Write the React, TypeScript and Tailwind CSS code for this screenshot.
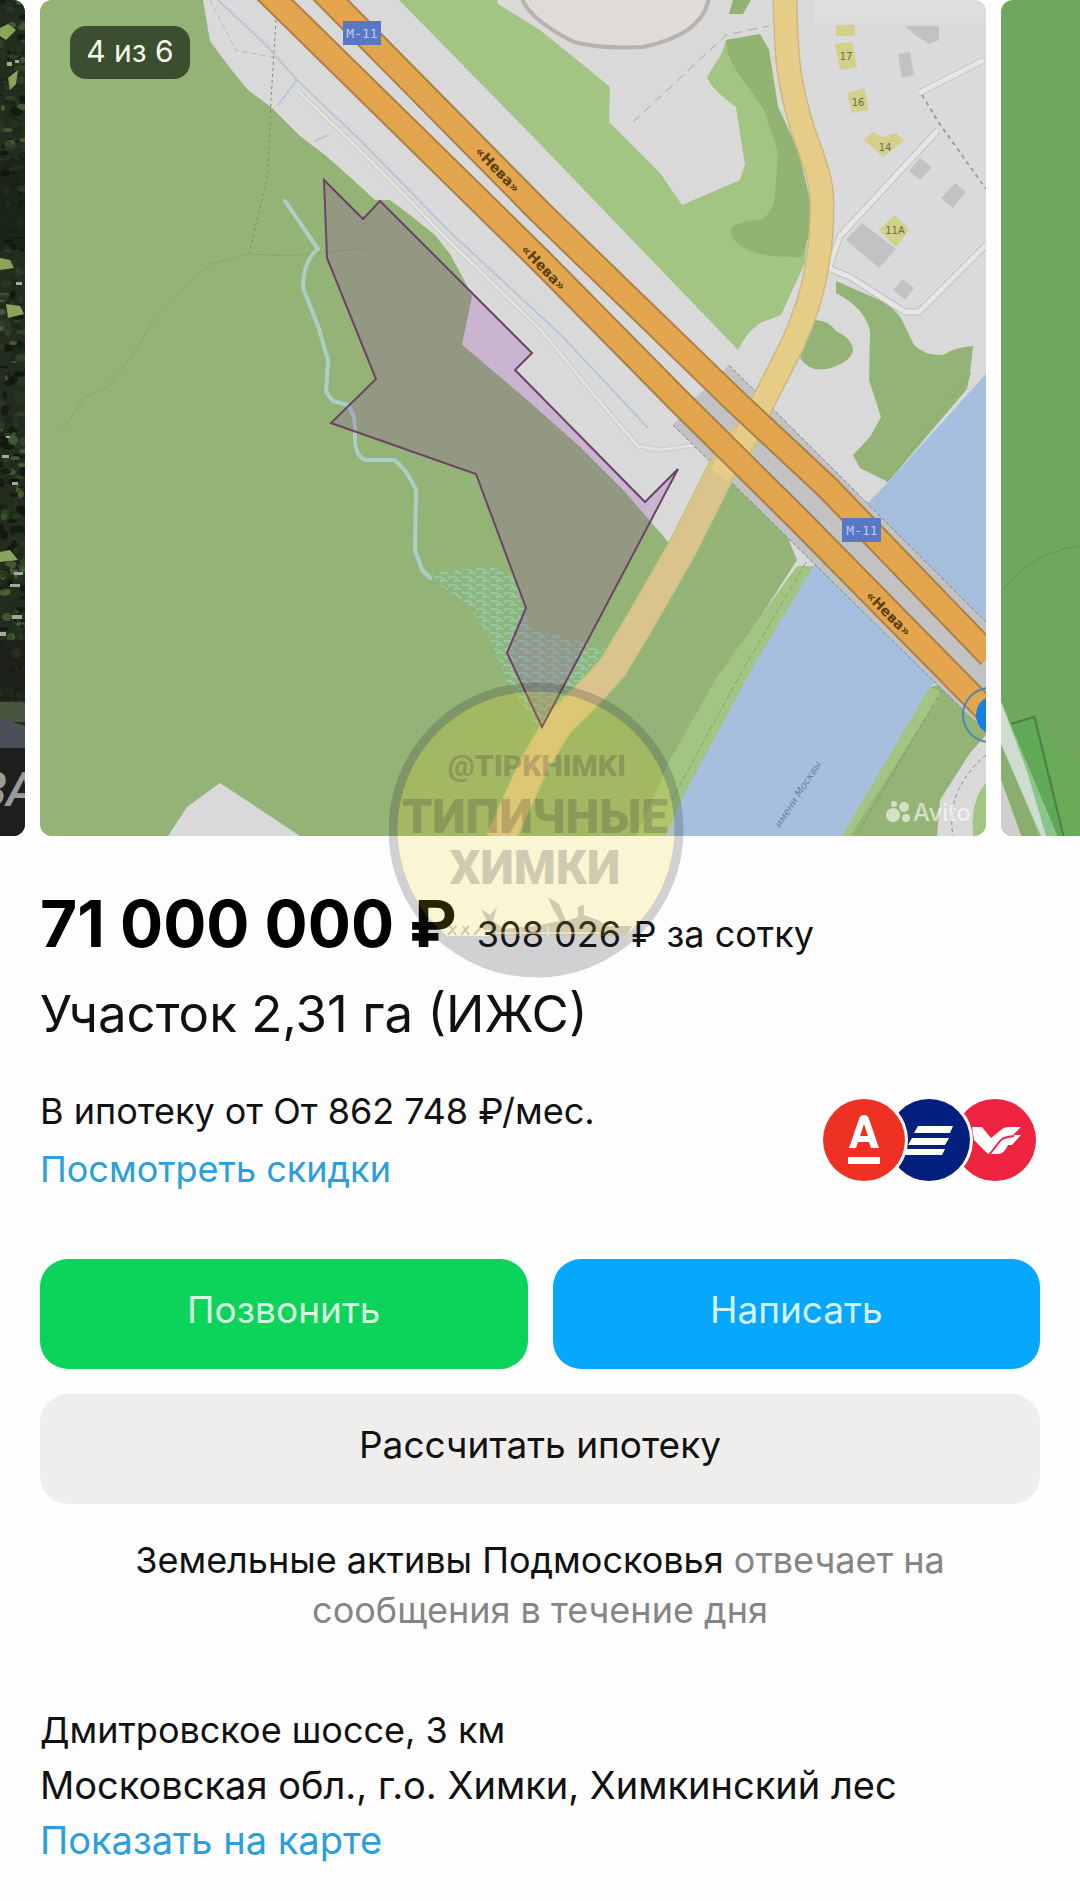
const speckles = (() => {
  let seed = 7;
  const next = () => {
    seed = (seed * 16807) % 2147483647;
    return seed / 2147483647;
  };
  const tones = ['#10170f', '#26371f', '#334a2a', '#4d6a38', '#1a2616', '#16120f', '#2f3a2a', '#222d1d'];
  return Array.from({ length: 380 }, () => ({
    x: Math.round(next() * 26),
    y: Math.round(next() * 700),
    rx: 2 + Math.round(next() * 4),
    ry: 1 + Math.round(next() * 4),
    fill: tones[Math.floor(next() * tones.length)],
  }));
})();

function ForestPhoto() {
  return (
    <svg className="block h-full w-full" viewBox="0 0 25 836" preserveAspectRatio="xMaxYMid slice" role="img" aria-label="Фото участка">
      <rect width="25" height="836" fill="#222d1d" />
      {speckles.map((s, i) => (
        <ellipse key={i} cx={s.x} cy={s.y} rx={s.rx} ry={s.ry} fill={s.fill} opacity="0.75" />
      ))}
      <path
        d="M0 28 L8 24 L16 30 L6 40 L0 36 Z M8 78 L18 70 L16 84 L10 90 Z M0 258 L10 260 L14 268 L0 270 Z M6 304 L20 306 L24 314 L8 318 Z M0 552 L10 550 L18 560 L0 562 Z"
        fill="#8aa45c"
      />
      <path
        d="M7 62 h5 v4 h-5 Z M15 60 h4 v3 h-4 Z M16 282 h6 v3 h-6 Z M2 455 h7 v3 h-7 Z M12 482 h6 v3 h-6 Z M6 436 h4 v2 h-4 Z M10 584 h10 v3 h-10 Z M14 572 h9 v3 h-9 Z M12 615 h10 v4 h-10 Z M0 632 h6 v4 h-6 Z"
        fill="#a3aa9a"
      />
      <rect y="160" width="25" height="90" fill="#0e160e" opacity="0.4" />
      <rect y="640" width="25" height="60" fill="#1b1d18" opacity="0.7" />
      <rect y="702" width="25" height="20" fill="#47573f" />
      <path d="M0 718 L25 726 V750 H0 Z" fill="#4b5058" />
      <rect y="748" width="25" height="88" fill="#1d1e1e" />
      <text x="-22" y="806" fontSize="48" fontFamily="Roboto, sans-serif" fontWeight="500" fontStyle="italic" fill="#9a9a96">ЗА</text>
    </svg>
  );
}

function SatelliteMap() {
  return (
    <svg className="block h-full w-full" viewBox="1002 0 78 836" preserveAspectRatio="xMinYMid slice" role="img" aria-label="Карта участка">
      <rect x="1002" width="78" height="836" fill="#6fa85c" />
      <path d="M1002 590 Q1035 548 1080 545" fill="none" stroke="#629a55" strokeWidth="1" />
      <path d="M1012 720 L1035 713 L1065 836 H1050 Z" fill="#60a956" />
      <path d="M1035 713 L1080 760 V836 H1065 Z" fill="#69ab59" />
      <path d="M1002 735 L1045 836 H1002 Z" fill="#8aad70" />
      <path d="M1002 775 L1024 836 H1002 Z" fill="#cfcfcd" />
      <path d="M1002 698 L1060 836 H1042 L1002 738 Z" fill="#8cc58b" />
      <path d="M1002 698 L1028 768 L1048 836 H1044 L1002 740 Z" fill="#cfdcd0" />
      <path d="M1012 720 L1035 713 L1065 836" fill="none" stroke="#4a7f45" strokeWidth="2" />
    </svg>
  );
}

const HIGHWAY_A = 'M263 -12 L540 260 L679 401 L800 521 L990 714';
const HIGHWAY_B = 'M319 -12 L540 212 L735 401 L827 487 L990 656';
const LOCAL_ROAD_TOP = 'M785 -5 C786 58 788 82 803 130 C815 165 822 179 822 205 C822 261 812 310 781 367 L747 433';
const LOCAL_ROAD_BOTTOM = 'M747 433 L723 467 L683 547 L640 622 L613 667 Q590 694 560 722 Q545 745 533 767 L500 840';
const PARCEL =
  '324,180 363,219 380,201 532,353 515,370 645,502 678,469 542,727 507,653 526,608 476,474 331,423 376,379 327,258';

function MapPicture() {
  return (
    <svg className="block h-full w-full" viewBox="40 0 946 836" preserveAspectRatio="xMidYMid slice" role="img" aria-label="Участок на карте">
      <defs>
        <pattern id="marsh" width="14" height="8" patternUnits="userSpaceOnUse">
          <path d="M0 2 q4 -3 10 1 M6 6 q4 -3 8 0" fill="none" stroke="#8fcca9" strokeWidth="2" />
        </pattern>
      </defs>
      <rect x="40" width="946" height="836" fill="#d9d9d9" />
      <path d="M830 24 H986 V310 L915 315 L835 276 L800 106 Z" fill="#dad9dc" />

      {/* woods on the west bank */}
      <path
        d="M40 0 H203 L210 41 L230 68 L248 90 L271 107 L300 136 L325 155 L350 177 L375 200 H390 L410 215 L435 235 L450 254 L462 276 L472 296 L462 345 L527 400 L580 447 L623 490 L668 542 L740 440 L760 470 L797 560 L720 680 L650 836 H300 L220 783 L187 807 L168 836 H40 Z"
        fill="#94b477"
      />
      <path d="M668 542 L735 425 L690 400 L600 450 Z" fill="#d9d9d9" />
      <path d="M462 345 L527 400 L580 447 L623 490 L668 542 L640 600 L450 500 Z" fill="#94b477" />

      {/* meadow and shrubs */}
      <path
        d="M399 0 L540 144 L738 350 Q745 334 760 323 L781 315 L791 293 L805 263 L810 200 L798 150 L778 107 L769 50 L760 34 L726 40 L722 53 L707 77 Q712 90 736 107 Q740 136 745 164 L740 180 L682 205 L660 173 L609 122 L610 87 L592 72 L540 30 L498 4 L497 0 Z"
        fill="#a2c583"
      />
      <path
        d="M726 40 L760 34 L769 50 L778 107 L798 150 L810 200 V233 L802 257 Q775 257 760 254 Q731 246 731 230 Q732 222 760 220 Q774 213 775 194 L778 153 L764 110 L743 80 Q726 58 726 40 Z M733 0 L729 14 H743 L751 0 Z"
        fill="#92b473"
      />
      <path d="M836 281 L884 302 Q898 312 902 320 L914 345 Q925 356 943 355 Q955 347 973 346 L970 374 L967 389 L888 482 L860 468 L853 455 L870 437 L881 417 L869 380 L870 331 Q865 308 836 293 Z" fill="#94b477" />
      <path d="M815 320 Q828 320 836 331 Q853 339 853 351 Q850 361 836 366 Q812 376 800 358 Z" fill="#94b477" />

      {/* canal */}
      <path d="M797 566 L717 677 L670 760 L636 836 H680 L720 770 L815 566 Z" fill="#a2c583" />
      <path d="M986 374 L888 482 L868 503 L813 567 L753 667 L683 797 L665 836 H842 L930 687 L986 640 Z" fill="#a6bfde" />
      <path d="M930 687 L842 836 H937 L940 800 L970 753 L986 735 V670 Z" fill="#94b477" />
      <path d="M930 687 L842 836 H850 L942 692 Z" fill="#a2c583" />
      <path d="M986 783 Q970 800 973 836 H986 Z" fill="#a2c583" />
      <path d="M942 690 L856 836" stroke="#789a60" strokeWidth="1" strokeDasharray="5 3" />
      <path d="M806 562 L740 675 L672 800" stroke="#83a768" strokeWidth="1" strokeDasharray="6 3" fill="none" />
      <path d="M986 755 Q945 790 953 836" fill="none" stroke="#8d8d8d" strokeWidth="1" strokeDasharray="4 3" />
      <path d="M971 373 L887 482" stroke="#86a76c" strokeWidth="1" strokeDasharray="8 5" />

      {/* stadium loop and paths */}
      <path d="M521 -4 Q528 19 574 42 Q600 49 643 47 Q705 34 709 -4" fill="#dedbd9" stroke="#b8b1af" strokeWidth="4" />
      <path d="M633 122 L726 35 L769 26" fill="none" stroke="#a5a5ac" strokeWidth="1" strokeDasharray="9 6" />
      <path d="M210 0 L236 50 L276 58" fill="none" stroke="#b3b3b3" strokeWidth="1" strokeDasharray="5 4" />
      <path d="M276 20 L271 100 L268 173 L249 254" fill="none" stroke="#7c8f6c" strokeWidth="1" strokeDasharray="3 3" />
      <path d="M365 248 L290 256 L249 254 L210 264 L190 283 L155 319 L130 358 L105 389 L85 397 L62 430" fill="none" stroke="#87a56e" strokeWidth="1" />
      <path d="M218 0 L265 44 L297 80 L360 140 L450 232 L560 334 L648 428 M297 80 L278 105 M315 141 L328 135" fill="none" stroke="#b9c7d3" strokeWidth="2" />
      <path d="M299 92 L370 160 L450 242 L540 329 L605 408 L638 446 L660 450 L710 443" fill="none" stroke="#c9cbc7" strokeWidth="5" />
      <path d="M299 92 L370 160 L450 242 L540 329 L605 408 L638 446 L660 450 L710 443" fill="none" stroke="#e2e3df" strokeWidth="3" />

      {/* stream and marsh */}
      <path
        d="M285 201 L318 249 Q303 261 303 288 L318 326 L328 360 L326 392 L333 401 L347 405 Q356 413 355 435 Q354 456 366 460 L394 460 Q406 468 416 490 L415 550 L422 570 L430 578"
        fill="none"
        stroke="#abcfc6"
        strokeWidth="4"
        strokeLinecap="round"
        strokeLinejoin="round"
      />
      <path d="M424 574 L490 566 L515 578 L530 628 L605 648 L575 690 L542 735 L507 680 L490 640 L470 606 Z" fill="url(#marsh)" />

      {/* streets and houses */}
      <g fill="none" strokeLinejoin="round">
        <path d="M829 267 L840 236 L938 130 M984 60 L919 93 M826 267 L850 277 L905 312 H919 L986 245" stroke="#c2c2c2" strokeWidth="7" />
        <path d="M829 267 L840 236 L938 130 M984 60 L919 93 M826 267 L850 277 L905 312 H919 L986 245" stroke="#e6e6e4" strokeWidth="5" />
        <path d="M922 95 L939 123 L986 189" stroke="#9c9c9c" strokeWidth="2" strokeDasharray="4 4" />
      </g>
      <rect x="814" y="0" width="172" height="23" fill="#dededc" />
      <path
        d="M862 223 L896 249 L879 268 L846 240 Z M920 158 L932 167 L920 180 L909 171 Z M955 183 L966 192 L953 208 L941 198 Z M903 279 L914 288 L905 300 L893 290 Z M898 54 L910 52 L914 75 L902 78 Z M905 26 H939 V40 L929 44 L915 35 Z"
        fill="#c3c2c2"
      />
      <path
        d="M836 25 H855 V36 H836 Z M835 44 L852 42 L857 67 L840 70 Z M847 93 L864 88 L869 110 L852 113 Z M864 140 L872 132 L883 137 L896 133 L904 141 L888 153 L883 157 Z M879 230 L895 215 L909 230 L896 247 Z"
        fill="#d3d08a"
      />
      <g fontFamily="DejaVu Sans, sans-serif" fontSize="10" fill="#6f6d45" textAnchor="middle">
        <text x="846" y="60">17</text>
        <text x="858" y="106">16</text>
        <text x="885" y="151">14</text>
        <text x="895" y="234">11А</text>
      </g>

      {/* bridge, roads */}
      <path d="M729 365 L986 622 V730 L963 710 L673 425 L690 403 L706 388 Z" fill="#c2c2c2" />
      <path d="M729 365 L986 622 M673 425 L963 710" stroke="#85858a" strokeWidth="1" strokeDasharray="4 2" />
      <path d={LOCAL_ROAD_BOTTOM} fill="none" stroke="#c6c67f" strokeWidth="30" />
      <path d={LOCAL_ROAD_BOTTOM} fill="none" stroke="#dac48c" strokeWidth="27" />
      <path d={LOCAL_ROAD_TOP} fill="none" stroke="#cfb683" strokeWidth="25" />
      <path d={LOCAL_ROAD_TOP} fill="none" stroke="#e5cd87" strokeWidth="22" />
      <path d="M765 398 L745 437 L720 475" fill="none" stroke="#e5cd87" strokeWidth="22" />
      <g fill="none" strokeLinejoin="round">
        <path d={HIGHWAY_A} stroke="#ab8045" strokeWidth="26" />
        <path d={HIGHWAY_B} stroke="#ab8045" strokeWidth="26" />
        <path d={HIGHWAY_A} stroke="#e3a54d" strokeWidth="22" />
        <path d={HIGHWAY_B} stroke="#e3a54d" strokeWidth="22" />
      </g>
      <g fontFamily="DejaVu Sans, sans-serif" fontSize="14" fontWeight="700" fill="#5c4012" textAnchor="middle">
        <text transform="translate(494 173) rotate(46)">«Нева»</text>
        <text transform="translate(540 271) rotate(46)">«Нева»</text>
        <text transform="translate(885 617) rotate(45)">«Нева»</text>
      </g>
      <g>
        <rect x="343" y="21" width="38" height="24" fill="#5977c4" />
        <rect x="842" y="518" width="39" height="24" fill="#5977c4" />
        <g fontFamily="DejaVu Sans Mono, monospace" fontSize="13" fill="#bccbf0" textAnchor="middle">
          <text x="362" y="38">М-11</text>
          <text x="862" y="535">М-11</text>
        </g>
      </g>
      <text transform="translate(780 828) rotate(-57)" fontFamily="DejaVu Sans, sans-serif" fontSize="10" fontStyle="italic" fill="#5f83ae">имени Москвы</text>

      {/* parcel */}
      <polygon points={PARCEL} fill="#8f2fb0" fillOpacity="0.21" stroke="#6d4267" strokeWidth="2" />

      <circle cx="990" cy="715" r="27" fill="none" stroke="#4a86b5" strokeWidth="2" />
      <circle cx="996" cy="715" r="20" fill="#1b80dd" />

      <g fill="#ffffff" opacity="0.6">
        <circle cx="893" cy="815" r="7" />
        <circle cx="904" cy="807" r="5" />
        <circle cx="906" cy="818" r="4" />
        <circle cx="894" cy="804" r="3" />
        <text x="913" y="821" fontFamily="Inter, sans-serif" fontWeight="500" fontSize="24">Avito</text>
      </g>
    </svg>
  );
}

function Watermark() {
  return (
    <svg className="pointer-events-none absolute -bottom-[143px] left-[36%] z-10 w-[298px]" viewBox="389 682 298 298" role="img" aria-label="Типичные Химки">
      <path d="M446 937 A139 139 0 1 1 626 937 Z" fill="#eed000" fillOpacity="0.17" />
      <g opacity="0.2">
        <circle cx="536" cy="831" r="143" fill="none" stroke="#28232d" strokeWidth="9" />
        <path
          d="M446 937 H490 V931 H484 L481 926 L487 922 L481 910 L490 916 L497 908 L493 922 L504 930 L540 926 L560 922 L552 908 L548 898 L559 905 L566 922 L578 918 V908 L584 906 V916 L600 922 L606 927 H632 L626 937 A139 139 0 0 1 446 937 Z"
          fill="#28232d"
        />
        <path d="M448 936 l8 -9 M456 936 l-6 -9 M461 936 l8 -9 M469 936 l-6 -9 M474 936 l8 -9" stroke="#28232d" strokeWidth="2" />
        <g fill="#28232d" fontFamily="Roboto, sans-serif" fontWeight="900" textAnchor="middle">
          <text x="537" y="777" fontSize="30">@TIPKHIMKI</text>
          <text x="535" y="834" fontSize="48">ТИПИЧНЫЕ</text>
          <text x="535" y="885" fontSize="48">ХИМКИ</text>
        </g>
      </g>
      <path d="M496 934 H600 M520 930 V937 M548 928 V937" fill="none" stroke="#fffbe0" strokeWidth="2" opacity="0.5" />
    </svg>
  );
}

function BankLogos() {
  return (
    <svg className="mr-1 block w-[214px] shrink-0" viewBox="822 1106 214 86" role="img" aria-label="Банки-партнёры">
      <circle cx="995" cy="1149" r="41" fill="#ee2340" />
      <path d="M972 1136 H982 L991 1147 L1001 1139 Q1004 1136 1009 1136 H1021 L1013 1144 H1021 L1012 1154 H1008 Q1004 1163 998 1163 H988 L974 1149 Z" fill="#fff" />
      <path d="M989 1164 L1000 1150 Q1003 1146 1014 1145" fill="none" stroke="#ee2340" strokeWidth="2" />
      <circle cx="929" cy="1149" r="44" fill="#fdfdfd" />
      <circle cx="929" cy="1149" r="41" fill="#04207e" />
      <path d="M918 1135 H953 L950 1142 H914 Z M912 1147 H949 L945 1154 H908 Z M906 1158 H945 L942 1164 H903 Z" fill="#fff" />
      <circle cx="864" cy="1149" r="44" fill="#fdfdfd" />
      <circle cx="864" cy="1149" r="41" fill="#ef3124" />
      <path fillRule="evenodd" d="M849 1157 L859 1128 Q860 1124 864 1124 Q868 1124 869 1128 L879 1157 H871 L869 1151 H858 L856 1157 Z M860 1145 H868 L864 1133 Z" fill="#fff" />
      <rect x="848" y="1166" width="32" height="7" fill="#fff" />
    </svg>
  );
}

export default function App() {
  return (
    <main className="min-h-screen overflow-x-hidden bg-[#fdfdfd] font-['Inter',sans-serif] text-[36px] leading-[50px] text-[#111111]">
      <section className="relative flex gap-[15px]">
        <div className="relative w-[25px] shrink-0 overflow-hidden rounded-r-xl">
          <div className="absolute inset-0">
            <ForestPhoto />
          </div>
        </div>
        <div className="relative aspect-[946/836] min-w-0 flex-1 overflow-hidden rounded-xl">
          <MapPicture />
          <span className="absolute left-[30px] top-[26px] flex h-[53px] w-[120px] items-center justify-center rounded-2xl bg-[#1e2d18]/75 pb-1 text-[30px] text-[#f4f8ec]">
            4 из 6
          </span>
        </div>
        <div className="relative w-[79px] shrink-0 overflow-hidden rounded-l-xl">
          <div className="absolute inset-0">
            <SatelliteMap />
          </div>
        </div>
        <Watermark />
      </section>

      <section className="px-10 pt-12">
        <p className="flex items-baseline gap-5 leading-[80px]">
          <span className="text-[64px] font-bold text-black">71 000 000 ₽</span>
          <span>308 026 ₽ за сотку</span>
        </p>
        <h1 className="text-[51px] leading-[80px]">Участок 2,31 га (ИЖС)</h1>

        <div className="mt-7 flex items-center justify-between">
          <div className="leading-[58px]">
            <p>В ипотеку от От 862 748 ₽/мес.</p>
            <a href="#discounts" className="block text-[#2a9fdc]">Посмотреть скидки</a>
          </div>
          <BankLogos />
        </div>

        <div className="mt-[61px] grid grid-cols-2 gap-[25px] text-[37px]">
          <button type="button" className="h-[110px] rounded-[28px] bg-[#0cd45a] pb-2 text-[#d6fbdf]">Позвонить</button>
          <button type="button" className="h-[110px] rounded-[28px] bg-[#06a7ff] pb-2 text-[#d5f2ff]">Написать</button>
          <button type="button" className="col-span-2 h-[110px] rounded-[28px] bg-[#efeeec] pb-2">Рассчитать ипотеку</button>
        </div>

        <p className="mx-auto mt-[31px] max-w-[860px] text-center text-[#858585]">
          <span className="text-[#111111]">Земельные активы Подмосковья</span> отвечает на сообщения в течение дня
        </p>

        <address className="mt-[68px] pb-8 text-[38px] not-italic leading-[55px]">
          <p className="text-[36px]">Дмитровское шоссе, 3 км</p>
          <p>Московская обл., г.о. Химки, Химкинский лес</p>
          <a href="#map" className="block text-[#2a9fdc]">Показать на карте</a>
        </address>
      </section>
    </main>
  );
}
